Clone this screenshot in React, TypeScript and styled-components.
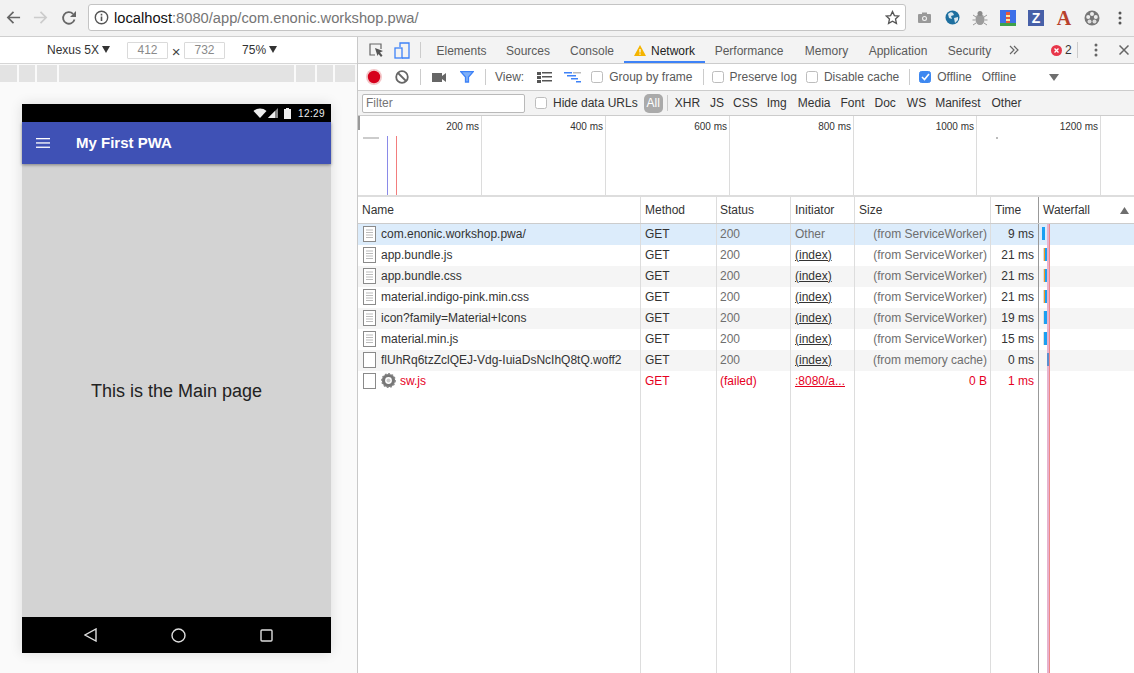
import React from "react";
import styled, { createGlobalStyle } from "styled-components";

const Global = createGlobalStyle`
  html, body { margin: 0; padding: 0; background: #fff; overflow: hidden; }
  body { font-family: "Liberation Sans", Arial, sans-serif; }
  * { box-sizing: border-box; }
`;

const Page = styled.div`
  width: 1134px; height: 673px; display: flex; flex-direction: column; overflow: hidden;
  font-size: 12px; color: #333;
`;

/* browser chrome */
const BrowserBar = styled.div`
  height: 37px; flex: none; background: #f2f2f2; border-bottom: 1px solid #cfcfcf;
  display: flex; align-items: center; padding-bottom: 1px;
`;
const NavBtn = styled.div<{ $w?: number }>`
  width: ${(p) => p.$w ?? 27}px; display: flex; justify-content: center; flex: none;
`;
const Omnibox = styled.div`
  width: 818px; height: 27px; margin-left: 5px; background: #fff; border: 1px solid #c4c4c4; border-radius: 3px;
  display: flex; align-items: center; padding: 0 5px; flex: none;
  font-size: 14.7px; color: #757575;
`;
const Host = styled.span`color: #111; margin-left: 5px;`;
const Spacer = styled.div`flex: 1;`;
const Exts = styled.div`display: flex; align-items: center; margin-left: 4px; flex: none;`;
const ExtSlot = styled.div`
  width: 28px; height: 20px; flex: none; display: flex; align-items: center; justify-content: center;
`;
const ZBadge = styled.span`
  width: 16px; height: 16px; background: #4760a8; color: #fff; font-weight: 700; font-size: 14px;
  display: flex; align-items: center; justify-content: center;
`;
const ABadge = styled.span`
  font-family: "Liberation Serif", serif; font-weight: 700; font-size: 20px; line-height: 20px; color: #b8412c;
`;

const Main = styled.div`flex: 1; display: flex; min-height: 0;`;

/* device pane */
const DevicePane = styled.div`
  width: 358px; flex: none; border-right: 1px solid #c9c9c9; background: #fafafa; display: flex; flex-direction: column;
`;
const DeviceBar = styled.div`
  height: 27px; flex: none; background: #fff; border-bottom: 1px solid #d6d6d6; display: flex; align-items: center;
  padding-left: 47px; color: #333; font-size: 12px;
`;
const DimBox = styled.div`
  width: 41px; height: 17px; border: 1px solid #dadada; border-radius: 1px; color: #8a8a8a;
  display: flex; align-items: center; justify-content: center; font-size: 12px;
`;
const Times = styled.span`width: 16px; text-align: center; font-size: 15px; color: #444; line-height: 17px; padding-top: 2px;`;
const Caret = styled.span`
  display: inline-block; width: 0; height: 0; margin-left: 3px; border-left: 4px solid transparent; border-right: 4px solid transparent;
  border-top: 7px solid #333; vertical-align: 1px;
`;
const Ruler = styled.div`
  height: 17px; margin-top: 1px; flex: none; display: flex; gap: 2px; padding-right: 2px;
`;
const RulerSeg = styled.div<{ $w: number; $grow?: boolean }>`
  width: ${(p) => p.$w}px; background: #e3e3e3; flex: ${(p) => (p.$grow ? 1 : "none")};
`;
const PhoneWrap = styled.div`padding: 22px 0 0 22px;`;
const Phone = styled.div`
  width: 309px; height: 549px; display: flex; flex-direction: column; box-shadow: 0 0 12px rgba(0,0,0,.12);
`;
const StatusBar = styled.div`
  height: 18px; flex: none; background: #000; color: #eee; display: flex; align-items: center; justify-content: flex-end;
  padding-right: 6px; font-size: 10px; letter-spacing: 0.4px;
`;
const AppBar = styled.div`
  height: 42px; flex: none; background: #3f51b5; color: #fff; display: flex; align-items: center; padding-left: 14px;
  box-shadow: 0 1px 3px rgba(0,0,0,.4); font-size: 15px; font-weight: 700; z-index: 1;
`;
const AppTitle = styled.span`margin-left: 26px; padding-bottom: 2px;`;
const PhoneBody = styled.div`
  flex: 1; background: #d3d3d3; display: flex; align-items: center; justify-content: center; color: #222; font-size: 18px;
  padding-top: 2px;
`;
const NavBar = styled.div`
  height: 36px; flex: none; background: #000; display: flex; align-items: center; padding-left: 62px; gap: 74px;
`;

/* devtools */
const Devtools = styled.div`flex: 1; min-width: 0; display: flex; flex-direction: column; background: #fff;`;
const TabBar = styled.div`
  height: 27px; flex: none; background: #f3f3f3; border-bottom: 1px solid #ccc; display: flex; align-items: center; padding-left: 10px;
`;
const Sep = styled.div<{ $h?: number; $ml?: number; $mr?: number }>`
  width: 1px; height: ${(p) => p.$h ?? 16}px; background: #ccc; flex: none;
  margin-left: ${(p) => p.$ml ?? 0}px; margin-right: ${(p) => p.$mr ?? 0}px;
`;
const Tab = styled.div<{ $active?: boolean; $w: number }>`
  height: 26px; width: ${(p) => p.$w}px; flex: none; display: flex; align-items: center; justify-content: center; gap: 5px;
  color: ${(p) => (p.$active ? "#222" : "#5a5a5a")}; font-size: 12px; padding-top: 3px;
  border-bottom: 2px solid ${(p) => (p.$active ? "#3e82f7" : "transparent")};
`;
const Toolbar = styled.div`
  height: 27px; flex: none; background: #fff; border-bottom: 1px solid #ccc; display: flex; align-items: center; padding-left: 8px; color: #5a5a5a;
`;
const Check = styled.span<{ $on?: boolean; $ml?: number }>`
  width: 12px; height: 12px; border-radius: 2.5px; flex: none; margin-left: ${(p) => p.$ml ?? 0}px; margin-right: 6px;
  border: 1px solid ${(p) => (p.$on ? "#3e88f0" : "#bdbdbd")}; background: ${(p) => (p.$on ? "#3e88f0" : "#fff")};
  display: flex; align-items: center; justify-content: center;
`;
const Label = styled.span<{ $ml?: number; $w?: number }>`
  margin-left: ${(p) => p.$ml ?? 0}px; white-space: nowrap; flex: none;
  ${(p) => (p.$w ? `width: ${p.$w}px;` : "")}
`;
const FilterBar = styled.div`
  height: 25px; flex: none; background: #f3f3f3; border-bottom: 1px solid #ccc; display: flex; align-items: center; padding-left: 4px; color: #333;
`;
const FilterInput = styled.div`
  width: 163px; height: 19px; background: #fff; border: 1px solid #b9b9b9; border-radius: 2px; color: #757575;
  padding-left: 3px; line-height: 17px; flex: none;
`;
const AllPill = styled.span`
  width: 19px; height: 19px; border-radius: 5px; background: #aaa; color: #fff; display: flex; align-items: center; justify-content: center;
  margin-left: 6px; font-size: 12px; flex: none;
`;
const Type = styled.span<{ $ml: number }>`margin-left: ${(p) => p.$ml}px; flex: none;`;

const Overview = styled.div`
  height: 81px; flex: none; border-bottom: 2px solid #ddd; display: flex; position: relative; overflow: hidden;
`;
const OvCol = styled.div<{ $w: number }>`
  width: ${(p) => p.$w}px; flex: none; border-right: 1px solid #dcdcdc; text-align: right; padding: 5px 2px 0 0; font-size: 10px; color: #333;
`;
const OvHandle = styled.div`position: absolute; left: 0; top: 0; width: 2px; height: 14px; background: #999;`;
const OvMark = styled.div<{ $c: string; $x: number }>`
  position: absolute; left: ${(p) => p.$x}px; top: 20px; bottom: 0; width: 1px; background: ${(p) => p.$c};
`;
const OvDash = styled.div`position: absolute; left: 5px; top: 21px; width: 16px; height: 2px; background: #ccc;`;
const OvDot = styled.div`position: absolute; left: 638px; top: 21px; width: 2px; height: 2px; background: #bbb;`;

const Table = styled.div`flex: 1; display: flex; flex-direction: column; min-height: 0; position: relative;`;
const columns = "283px 76px 74px 64px 136px 48px 1fr";
const HeadRow = styled.div`
  display: grid; grid-template-columns: ${columns}; height: 27px; flex: none; border-bottom: 1px solid #ccc;
`;
const HeadCell = styled.div<{ $strong?: boolean }>`
  border-right: 1px solid ${(p) => (p.$strong ? "#999" : "#ddd")}; padding-left: 4px; display: flex; align-items: center; color: #333;
  justify-content: space-between;
  &:nth-child(3) { padding-left: 3px; }
  &:last-child { border-right: 0; padding-right: 4px; }
`;
const Row = styled.div<{ $bg: string; $failed?: boolean }>`
  display: grid; grid-template-columns: ${columns}; height: 21px; flex: none; background: ${(p) => p.$bg};
  color: ${(p) => (p.$failed ? "#e6001e" : "#333")};
`;
const Cell = styled.div<{ $right?: boolean; $muted?: boolean; $strong?: boolean; $pl?: number; $pr?: number }>`
  border-right: 1px solid ${(p) => (p.$strong ? "#999" : "#ddd")};
  padding: 0 ${(p) => p.$pr ?? 4}px 2px ${(p) => p.$pl ?? 4}px;
  display: flex; align-items: center; white-space: nowrap; overflow: hidden;
  justify-content: ${(p) => (p.$right ? "flex-end" : "flex-start")};
  ${(p) => (p.$muted ? "color: #6e6e6e;" : "")}
  &:last-child { border-right: 0; }
`;
const Ul = styled.span`text-decoration: underline;`;
const Ellipsis = styled.span`overflow: hidden; text-overflow: ellipsis; text-decoration: underline;`;
const NameIcon = styled.span`width: 15px; height: 16px; flex: none; margin-right: 3px; margin-left: 1px; display: flex;`;
const Filler = styled.div`
  flex: 1; display: grid; grid-template-columns: ${columns};
`;
const Bars = styled.div`position: relative; height: 21px;`;
const Bar = styled.div<{ $x: number; $w: number; $c: string }>`
  position: absolute; left: ${(p) => p.$x}px; width: ${(p) => p.$w}px; top: 4px; bottom: 4px; background: ${(p) => p.$c}; z-index: 2;
`;
const WfLines = styled.div`
  position: absolute; left: 689px; top: 27px; bottom: 0; width: 3px; background: #e7b3cf;
  border-right: 1px solid #e88;
`;

const Back = ({ c }: { c: string }) => (
  <svg width="15" height="15" viewBox="0 0 16 16" fill="none" stroke={c} strokeWidth="1.8"><path d="M15 8H2M8 2 2 8l6 6" /></svg>
);
const Fwd = ({ c }: { c: string }) => (
  <svg width="15" height="15" viewBox="0 0 16 16" fill="none" stroke={c} strokeWidth="1.8"><path d="M1 8h13M8 2l6 6-6 6" /></svg>
);
const Reload = () => (
  <svg width="16" height="16" viewBox="0 0 16 16" fill="none"><path d="M13.5 9.5A5.8 5.8 0 1 1 12 3.8" stroke="#666" strokeWidth="1.8" /><path d="M15 1v6H9z" fill="#666" /></svg>
);
const Info = () => (
  <svg width="15" height="15" viewBox="0 0 15 15" fill="none"><circle cx="7.5" cy="7.5" r="6.2" stroke="#555" strokeWidth="1.4" /><path d="M7.5 6.5v4.5M7.5 3.8v1.6" stroke="#555" strokeWidth="1.6" /></svg>
);
const Star = () => (
  <svg width="15" height="15" viewBox="0 0 16 16" fill="none" stroke="#555" strokeWidth="1.4"><path d="m8 1.6 2 4.3 4.7.5-3.5 3.2 1 4.7L8 11.9l-4.2 2.4 1-4.7L1.300 6.400 6 5.900z" /></svg>
);
const Camera = () => (
  <svg width="13" height="16" viewBox="0 0 13 16"><rect y="4" width="13" height="9" rx="1" fill="#999" /><rect x="4" y="2.500" width="5" height="2" fill="#999" /><circle cx="6.500" cy="8.500" r="2.500" fill="#f2f2f2" /><circle cx="6.500" cy="8.500" r="1.400" fill="#999" /></svg>
);
const Globe = () => (
  <svg width="15" height="15" viewBox="0 0 15 15"><circle cx="7.500" cy="7.500" r="7" fill="#1e6f9f" /><path d="M3 4c2-2 4-2 5-1l1 2-3 1 1 3-3-1zM9 8l4-1 0 3-3 3z" fill="#d9e8ef" /></svg>
);
const Bug = () => (
  <svg width="16" height="16" viewBox="0 0 16 16"><ellipse cx="8" cy="9.500" rx="4.500" ry="5.500" fill="#9c9c9c" /><circle cx="8" cy="3.500" r="2.500" fill="#8a8a8a" /><path d="M1 5l3 2M15 5l-3 2M0.500 10h3M15.500 10h-3M1 15l3-2M15 15l-3-2" stroke="#999" strokeWidth="1" /></svg>
);
const Lighthouse = () => (
  <svg width="16" height="16" viewBox="0 0 16 16"><rect width="16" height="16" fill="#3e6fe8" /><rect y="13" width="16" height="3" fill="#3fa14a" /><rect x="6" y="2" width="4" height="11" fill="#e9553b" /><rect x="6" y="5" width="4" height="2" fill="#f6e7a0" /><rect x="6" y="9" width="4" height="2" fill="#f6e7a0" /></svg>
);
const Reel = () => (
  <svg width="16" height="16" viewBox="0 0 16 16"><circle cx="8" cy="8" r="7.500" fill="#777" /><circle cx="8" cy="4" r="2" fill="#eee" /><circle cx="4.200" cy="7" r="2" fill="#eee" /><circle cx="11.800" cy="7" r="2" fill="#eee" /><circle cx="5.500" cy="11.500" r="2" fill="#ddd" /><circle cx="10.500" cy="11.500" r="2" fill="#ddd" /></svg>
);
const Dots = ({ c = "#555" }: { c?: string }) => (
  <svg width="4" height="14" viewBox="0 0 4 14" fill={c}><circle cx="2" cy="2" r="1.500" /><circle cx="2" cy="7" r="1.500" /><circle cx="2" cy="12" r="1.500" /></svg>
);
const Wifi = () => (
  <svg width="14" height="10" viewBox="0 0 13 10"><path d="M0 3c3.500-3.300 9.500-3.300 13 0L6.500 10z" fill="#eee" /></svg>
);
const Signal = () => (
  <svg width="10" height="10" viewBox="0 0 10 10" style={{ marginLeft: 1 }}><path d="M10 0v10H0z" fill="#888" /><path d="M7 3v7H0z" fill="#eee" /></svg>
);
const Battery = () => (
  <svg width="7" height="11" viewBox="0 0 7 11" style={{ marginLeft: 6 }}><path d="M2 0h3v1h2v10H0V1h2z" fill="#eee" /></svg>
);
const Menu = () => (
  <svg width="14" height="10" viewBox="0 0 14 10" fill="#fff"><rect width="14" height="1.300" /><rect y="4.300" width="14" height="1.300" /><rect y="8.600" width="14" height="1.300" /></svg>
);
const NavBack = () => (
  <svg width="13" height="14" viewBox="0 0 13 14" fill="none" stroke="#ddd" strokeWidth="1.400"><path d="M12 1v12L1 7z" /></svg>
);
const NavHome = () => (
  <svg width="15" height="15" viewBox="0 0 15 15" fill="none" stroke="#ddd" strokeWidth="1.400"><circle cx="7.500" cy="7.500" r="6.500" /></svg>
);
const NavRecent = () => (
  <svg width="13" height="13" viewBox="0 0 13 13" fill="none" stroke="#ddd" strokeWidth="1.400"><rect x="1" y="1" width="11" height="11" rx="1" /></svg>
);
const Inspect = () => (
  <svg width="16" height="16" viewBox="0 0 16 16" fill="none"><path d="M7 13H2V2h11v5" stroke="#666" strokeWidth="1.200" /><path d="m7 6 8 3-3 1.500 2.500 3-1.500 1.500-2.500-3L9.500 14z" fill="#555" /></svg>
);
const DeviceIcon = () => (
  <svg width="16" height="17" viewBox="0 0 16 17" fill="none" stroke="#3e82f7" strokeWidth="1.300"><path d="M6 5V1h9v15H8" /><rect x="1" y="6" width="7" height="10" /></svg>
);
const Warn = () => (
  <svg width="12" height="11" viewBox="0 0 12 11"><path d="M6 0l6 11H0z" fill="#f4b400" /><path d="M6 4v3.500M6 8.500v1.300" stroke="#fff" strokeWidth="1.200" /></svg>
);
const More = () => (
  <svg width="10" height="10" viewBox="0 0 10 10" fill="none" stroke="#666" strokeWidth="1.200"><path d="m1 1 4 4-4 4M5 1l4 4-4 4" /></svg>
);
const ErrBadge = () => (
  <svg width="11" height="11" viewBox="0 0 10 10"><circle cx="5" cy="5" r="5" fill="#e8364a" /><path d="m3.200 3.200 3.600 3.600m0-3.600L3.200 6.800" stroke="#fff" strokeWidth="1.200" /></svg>
);
const Close = () => (
  <svg width="10" height="10" viewBox="0 0 10 10" stroke="#666" strokeWidth="1.500"><path d="m.5.5 9 9m0-9-9 9" /></svg>
);
const Rec = () => (
  <svg width="16" height="16" viewBox="0 0 16 16"><circle cx="8" cy="8" r="8" fill="#f3c6c8" /><circle cx="8" cy="8" r="6.200" fill="#d6001c" /></svg>
);
const Clear = () => (
  <svg width="14" height="14" viewBox="0 0 14 14" fill="none" stroke="#666" strokeWidth="1.800"><circle cx="7" cy="7" r="5.800" /><path d="m3 3 8 8" /></svg>
);
const Video = () => (
  <svg width="14" height="9" viewBox="0 0 14 9" fill="#666"><rect width="10" height="9" /><path d="m10 3 4-3v9l-4-3z" /></svg>
);
const Funnel = () => (
  <svg width="14" height="12" viewBox="0 0 14 12" fill="none" stroke="#3e82f7" strokeWidth="1.300"><path d="M.8.700h12.400L8.500 6v5H5.500V6z" fill="#7fb0f7" /></svg>
);
const ListView = () => (
  <svg width="15" height="11" viewBox="0 0 15 11" fill="#555"><rect width="4" height="3" /><rect y="4" width="4" height="3" /><rect y="8" width="4" height="3" /><rect x="5" width="10" height="1.500" /><rect x="5" y="4" width="10" height="1.500" /><rect x="5" y="8" width="10" height="1.500" /></svg>
);
const WaterView = () => (
  <svg width="17" height="11" viewBox="0 0 17 11" fill="#3e82f7"><rect width="8" height="1.500" /><rect x="3" y="3" width="9" height="1.500" /><rect x="7" y="6" width="7" height="1.500" /><rect x="12" y="9" width="5" height="1.500" /><rect x="9" width="8" height="1.500" fill="#bbb" /></svg>
);
const Tick = () => (
  <svg width="9" height="8" viewBox="0 0 9 8" fill="none" stroke="#fff" strokeWidth="1.600"><path d="m1 4 2.500 2.500L8 1" /></svg>
);
const DocIcon = () => (
  <svg width="14" height="16" viewBox="0 0 14 16" fill="#fff" stroke="#8a8a8a"><rect x=".5" y=".5" width="12" height="15" /><path d="M3 4h7M3 6.500h7M3 9h7M3 11.500h7" stroke="#bbb" /></svg>
);
const BlankIcon = () => (
  <svg width="14" height="16" viewBox="0 0 14 16" fill="#fff" stroke="#8a8a8a"><rect x=".5" y=".5" width="12" height="15" /></svg>
);
const Gear = () => (
  <svg width="15" height="15" viewBox="0 0 15 15" style={{ marginRight: 4 }}>
    <circle cx="7.500" cy="7.500" r="5" fill="none" stroke="#777" strokeWidth="3.200" />
    <circle cx="7.500" cy="7.500" r="6.600" fill="none" stroke="#888" strokeWidth="1.600" strokeDasharray="1.800 1.600" />
    <circle cx="7.500" cy="7.500" r="2" fill="#ccc" />
  </svg>
);
const SortUp = () => (
  <svg width="9" height="7" viewBox="0 0 9 7" style={{ marginRight: 1 }}><path d="M4.500 0 9 7H0z" fill="#6e6e6e" /></svg>
);
const Tri = () => (
  <svg width="10" height="7" viewBox="0 0 10 7"><path d="M0 0h10L5 7z" fill="#6e6e6e" /></svg>
);

type Seg = { x: number; w: number; c: string };
type Req = { name: string; icon: "doc" | "blank" | "gear"; status: string; init: string; size: string; time: string; bars: Seg[] };

const amber: Seg[] = [{ x: 4, w: 1, c: "#ddd" }, { x: 5, w: 1, c: "#f19a23" }, { x: 6, w: 2, c: "#1a9ff2" }];
const blue: Seg[] = [{ x: 4, w: 1, c: "#ddd" }, { x: 5, w: 3, c: "#1a9ff2" }];

const rows: Req[] = [
  { name: "com.enonic.workshop.pwa/", icon: "doc", status: "200", init: "Other", size: "(from ServiceWorker)", time: "9 ms", bars: [{ x: 3, w: 3, c: "#1a9ff2" }] },
  { name: "app.bundle.js", icon: "doc", status: "200", init: "(index)", size: "(from ServiceWorker)", time: "21 ms", bars: amber },
  { name: "app.bundle.css", icon: "doc", status: "200", init: "(index)", size: "(from ServiceWorker)", time: "21 ms", bars: amber },
  { name: "material.indigo-pink.min.css", icon: "doc", status: "200", init: "(index)", size: "(from ServiceWorker)", time: "21 ms", bars: amber },
  { name: "icon?family=Material+Icons", icon: "doc", status: "200", init: "(index)", size: "(from ServiceWorker)", time: "19 ms", bars: blue },
  { name: "material.min.js", icon: "doc", status: "200", init: "(index)", size: "(from ServiceWorker)", time: "15 ms", bars: blue },
  { name: "flUhRq6tzZclQEJ-Vdg-IuiaDsNcIhQ8tQ.woff2", icon: "blank", status: "200", init: "(index)", size: "(from memory cache)", time: "0 ms", bars: [{ x: 8, w: 2, c: "#5b8fd0" }] },
  { name: "sw.js", icon: "gear", status: "(failed)", init: ":8080/a...", size: "0 B", time: "1 ms", bars: [] },
];

const bgFor = (i: number) => (i === 0 ? "#dcecfb" : i % 2 === 0 ? "#f5f5f5" : "#fff");

export default function App() {
  return (
    <Page>
      <Global />
      <BrowserBar>
        <NavBtn><Back c="#666" /></NavBtn>
        <NavBtn><Fwd c="#ccc" /></NavBtn>
        <NavBtn $w={29}><Reload /></NavBtn>
        <Omnibox>
          <Info />
          <Host>localhost</Host>:8080/app/com.enonic.workshop.pwa/
          <Spacer />
          <Star />
        </Omnibox>
        <Exts>
          <ExtSlot><Camera /></ExtSlot>
          <ExtSlot><Globe /></ExtSlot>
          <ExtSlot><Bug /></ExtSlot>
          <ExtSlot><Lighthouse /></ExtSlot>
          <ExtSlot><ZBadge>Z</ZBadge></ExtSlot>
          <ExtSlot><ABadge>A</ABadge></ExtSlot>
          <ExtSlot><Reel /></ExtSlot>
          <ExtSlot><Dots /></ExtSlot>
        </Exts>
      </BrowserBar>
      <Main>
        <DevicePane>
          <DeviceBar>
            <Label>Nexus 5X<Caret /></Label>
            <Label $ml={17} />
            <DimBox>412</DimBox>
            <Times>×</Times>
            <DimBox>732</DimBox>
            <Label $ml={17}>75%<Caret /></Label>
          </DeviceBar>
          <Ruler>
            <RulerSeg $w={17} /><RulerSeg $w={16} /><RulerSeg $w={20} /><RulerSeg $w={236} $grow />
            <RulerSeg $w={19} /><RulerSeg $w={16} /><RulerSeg $w={20} />
          </Ruler>
          <PhoneWrap>
            <Phone>
              <StatusBar><Wifi /><Signal /><Battery /><Label $ml={7}>12:29</Label></StatusBar>
              <AppBar><Menu /><AppTitle>My First PWA</AppTitle></AppBar>
              <PhoneBody>This is the Main page</PhoneBody>
              <NavBar><NavBack /><NavHome /><NavRecent /></NavBar>
            </Phone>
          </PhoneWrap>
        </DevicePane>
        <Devtools>
          <TabBar>
            <Inspect />
            <Label $ml={10} />
            <DeviceIcon />
            <Sep $ml={10} $mr={6} />
            <Tab $w={69}>Elements</Tab>
            <Tab $w={64}>Sources</Tab>
            <Tab $w={64}>Console</Tab>
            <Tab $w={81} $active><Warn />Network</Tab>
            <Tab $w={88}>Performance</Tab>
            <Tab $w={67}>Memory</Tab>
            <Tab $w={76}>Application</Tab>
            <Tab $w={67}>Security</Tab>
            <Label $ml={6} /><More />
            <Label $ml={32} /><ErrBadge />
            <Label $ml={3}>2</Label>
            <Sep $ml={5} $h={16} />
            <Label $ml={16} /><Dots c="#666" />
            <Label $ml={21} /><Close />
          </TabBar>
          <Toolbar>
            <Rec />
            <Label $ml={13} /><Clear />
            <Sep $ml={11} $mr={11} />
            <Video />
            <Label $ml={14} /><Funnel />
            <Sep $ml={11} $mr={9} />
            <Label>View:</Label>
            <Label $ml={13} /><ListView />
            <Label $ml={12} /><WaterView />
            <Check $ml={10} />
            <Label>Group by frame</Label>
            <Sep $ml={10} $mr={8} />
            <Check />
            <Label>Preserve log</Label>
            <Check $ml={9} />
            <Label>Disable cache</Label>
            <Sep $ml={10} $mr={9} />
            <Check $on><Tick /></Check>
            <Label>Offline</Label>
            <Label $ml={10} $w={67}>Offline</Label>
            <Tri />
          </Toolbar>
          <FilterBar>
            <FilterInput>Filter</FilterInput>
            <Check $ml={10} />
            <Label>Hide data URLs</Label>
            <AllPill>All</AllPill>
            <Sep $ml={4} />
            <Type $ml={7}>XHR</Type>
            <Type $ml={10}>JS</Type>
            <Type $ml={9}>CSS</Type>
            <Type $ml={9}>Img</Type>
            <Type $ml={11}>Media</Type>
            <Type $ml={10}>Font</Type>
            <Type $ml={10}>Doc</Type>
            <Type $ml={11}>WS</Type>
            <Type $ml={9}>Manifest</Type>
            <Type $ml={11}>Other</Type>
          </FilterBar>
          <Overview>
            <OvCol $w={124}>200 ms</OvCol>
            <OvCol $w={124}>400 ms</OvCol>
            <OvCol $w={124}>600 ms</OvCol>
            <OvCol $w={124}>800 ms</OvCol>
            <OvCol $w={123}>1000 ms</OvCol>
            <OvCol $w={124}>1200 ms</OvCol>
            <OvHandle />
            <OvDash />
            <OvDot />
            <OvMark $c="#8a8ae8" $x={29} />
            <OvMark $c="#f27d7d" $x={38} />
          </Overview>
          <Table>
            <HeadRow>
              <HeadCell>Name</HeadCell>
              <HeadCell>Method</HeadCell>
              <HeadCell>Status</HeadCell>
              <HeadCell>Initiator</HeadCell>
              <HeadCell>Size</HeadCell>
              <HeadCell $strong>Time</HeadCell>
              <HeadCell>Waterfall<SortUp /></HeadCell>
            </HeadRow>
            {rows.map((r, i) => {
              const failed = r.icon === "gear";
              const muted = !failed;
              return (
                <Row key={r.name} $bg={bgFor(i)} $failed={failed}>
                  <Cell>
                    <NameIcon>{r.icon === "doc" ? <DocIcon /> : <BlankIcon />}</NameIcon>
                    {failed && <Gear />}
                    {r.name}
                  </Cell>
                  <Cell>GET</Cell>
                  <Cell $muted={muted} $pl={3}>{r.status}</Cell>
                  <Cell $muted={i === 0}>
                    {i === 0 ? r.init : failed ? <Ellipsis>{r.init}</Ellipsis> : <Ul>{r.init}</Ul>}
                  </Cell>
                  <Cell $right $muted={muted} $pr={3}>{r.size}</Cell>
                  <Cell $right $strong>{r.time}</Cell>
                  <Cell $pl={0}>
                    <Bars>
                      {r.bars.map((b, j) => (
                        <Bar key={j} $x={b.x} $w={b.w} $c={b.c} />
                      ))}
                    </Bars>
                  </Cell>
                </Row>
              );
            })}
            <Filler>
              <Cell /><Cell /><Cell /><Cell /><Cell /><Cell $strong /><Cell />
            </Filler>
            <WfLines />
          </Table>
        </Devtools>
      </Main>
    </Page>
  );
}
